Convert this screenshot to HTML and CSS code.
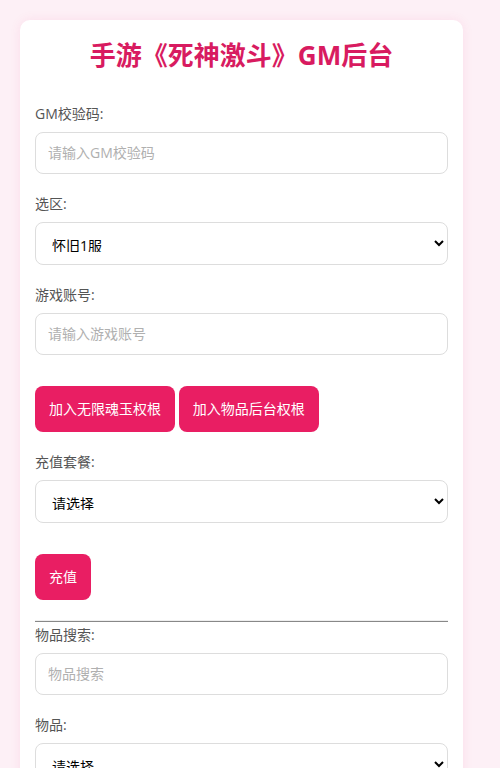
FILE: index.html
```html
<!DOCTYPE html>
<html>

<head>
    <meta charset="utf-8">
    <title>GM后台</title>
    <link rel="stylesheet" href="styles.css">
</head>

<body>

    <div class="container">
        <h1>手游《死神激斗》GM后台</h1>

        <div class="form-group">
            <label for="gmcode">GM校验码:</label>
            <input type="text" id="gmcode" placeholder="请输入GM校验码">
        </div>

        <div class="form-group">
            <label for="server">选区:</label>
            <select id="server">
                <option>怀旧1服</option>
                <option>怀旧2服</option>
            </select>
        </div>

        <div class="form-group">
            <label for="account">游戏账号:</label>
            <input type="text" id="account" placeholder="请输入游戏账号">
        </div>

        <div class="btn-row">
            <button class="actionbtn">加入无限魂玉权根</button>
            <button class="actionbtn">加入物品后台权根</button>
        </div>

        <div class="form-group">
            <label for="pack">充值套餐:</label>
            <select id="pack">
                <option>请选择</option>
            </select>
        </div>

        <div class="btn-row">
            <button class="actionbtn">充值</button>
        </div>

        <hr>

        <div class="form-group">
            <label for="search">物品搜索:</label>
            <input type="text" id="search" placeholder="物品搜索">
        </div>

        <div class="form-group">
            <label for="item">物品:</label>
            <select id="item">
                <option>请选择</option>
            </select>
        </div>

        <div class="form-group">
            <label for="amount">数量:</label>
            <input type="text" id="amount" placeholder="请输入数量">
        </div>

        <div class="btn-row">
            <button class="actionbtn">发送物品</button>
        </div>

        <p class="tips">提示: 请先填写GM校验码和游戏账号</p>
    </div>

</body>

</html>
```

FILE: styles.css
```css
* {
    box-sizing: border-box;
}

body {
    margin: 0;
    padding: 20px;
    background-color: #fdf0f6;
    font-family: "Open Sans", "Noto Sans CJK SC", sans-serif;
    font-size: 14px;
    color: #333;
}

.container {
    max-width: 443px;
    padding: 20px 15px;
    background-color: #fff;
    border-radius: 10px;
    box-shadow: 0 0 12px rgba(233, 30, 99, 0.08);
}

h1 {
    margin: 0 0 34px 0;
    font-size: 26px;
    line-height: 30px;
    text-align: center;
    color: #d81b60;
}

.form-group {
    margin-bottom: 20px;
}

label {
    display: block;
    margin-bottom: 8px;
    line-height: 20px;
    color: #555;
}

input[type=text],
select {
    display: block;
    width: 100%;
    padding: 12px;
    border: 1px solid #ddd;
    border-radius: 8px;
    background-color: #fff;
    font-family: inherit;
    font-size: 14px;
    line-height: 16px;
    color: #000;
    outline: none;
}

select {
    height: 43px;
}

input::placeholder {
    color: #b0b0b0;
}

.btn-row {
    margin: 31px 0 20px 0;
}

.actionbtn {
    padding: 14px;
    border: none;
    border-radius: 8px;
    background-color: #e91e63;
    color: #fff;
    font-family: inherit;
    font-size: 14px;
    line-height: 18px;
    cursor: pointer;
}

hr {
    height: 0;
    margin: 0 0 3px 0;
    border: none;
    border-top: 1px solid #eee;
    border-bottom: 1px solid #888;
}

.tips {
    margin: 20px 0 60px 0;
    color: #888;
}
```
